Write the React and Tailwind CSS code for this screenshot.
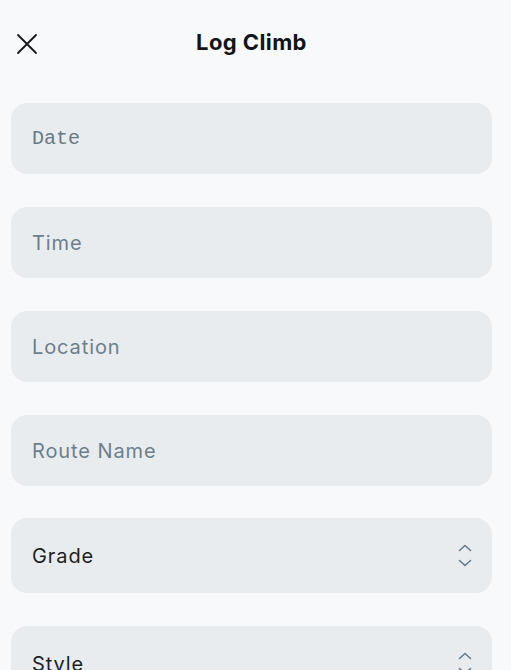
import React from "react";

const sans = "font-['Inter','Liberation_Sans',sans-serif]";

function Field({ label, mono }) {
  return (
    <div className="h-[71px] rounded-2xl bg-[#e9ecef] flex items-center pl-[21px]">
      <span
        className={
          mono
            ? "font-['Liberation_Mono',monospace] text-[20px] text-[#667a87]"
            : "text-[20px] tracking-[0.9px] text-[#6b808c]"
        }
      >
        {label}
      </span>
    </div>
  );
}

function Chevrons() {
  return (
    <svg width="16" height="30" viewBox="0 0 16 30" fill="none" stroke="#66788a" strokeWidth="1.6" strokeLinecap="round" strokeLinejoin="round">
      <path d="M2.5 9.5 L8 4.5 L13.5 9.5" />
      <path d="M2.5 19.5 L8 24.5 L13.5 19.5" />
    </svg>
  );
}

function Select({ label }) {
  return (
    <div className="h-[75px] rounded-2xl bg-[#e9ecef] flex items-center justify-between pl-[21px] pr-[19px]">
      <span className="text-[20px] tracking-[0.9px] text-[#1c1f22]">{label}</span>
      <Chevrons />
    </div>
  );
}

export default function App() {
  return (
    <div className={`min-h-screen bg-[#f8f9fb] ${sans} overflow-hidden h-[670px]`}>
      <div className="relative h-[86px] pl-[11px] pr-[19px] flex items-center justify-center">
        <button className="absolute left-[15px] top-[32px] w-[24px] h-[24px] flex items-center justify-center">
          <svg width="24" height="24" viewBox="0 0 24 24" fill="none" stroke="#16181b" strokeWidth="1.8" strokeLinecap="round">
            <path d="M3 3 L21 21 M21 3 L3 21" />
          </svg>
        </button>
        <h1 className="text-[22px] tracking-[0.4px] font-bold text-[#121417] -mt-[2px]">Log Climb</h1>
      </div>
      <div className="pl-[11px] pr-[19px] pt-[17px] flex flex-col gap-[33px]">
        <Field label="Date" mono />
        <Field label="Time" />
        <Field label="Location" />
        <Field label="Route Name" />
        <div className="-mt-[1px] flex flex-col gap-[33px]">
          <Select label="Grade" />
          <Select label="Style" />
        </div>
      </div>
    </div>
  );
}
